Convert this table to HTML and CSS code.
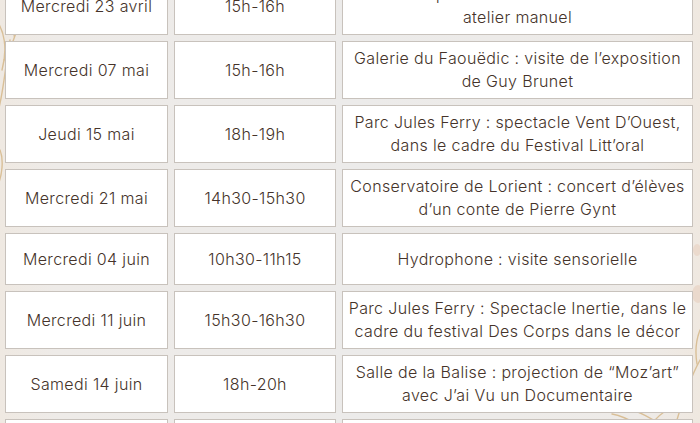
FILE: index.html
```html
<!DOCTYPE html>
<html lang="fr">
<head>
<meta charset="utf-8">
<link rel="stylesheet" href="styles.css">
</head>
<body>
<div class="page">
  <svg class="deco" width="700" height="423" viewBox="0 0 700 423" aria-hidden="true">
    <g fill="none" stroke="#d9bf97" stroke-width="1.4" stroke-linecap="round">
      <path d="M-4 20 C4 30 8 48 2 70"/>
      <path d="M14 36 C18 30 20 26 24 22"/>
      <path d="M10 40 C6 60 4 90 -2 112"/>
      <path d="M17 30 C12 44 10 52 4 60"/>
      <path d="M0 150 C4 160 2 175 -2 185"/>
      <path d="M620 405 C640 412 652 418 668 430"/>
      <path d="M652 423 C662 412 672 405 690 398"/>
      <path d="M700 360 C690 378 684 396 676 423"/>
      <path d="M700 330 C696 340 695 352 697 364"/>
      <path d="M612 414 C622 416 630 420 636 424"/>
    </g>
    <g fill="#ead6c8" opacity="0.8">
      <ellipse cx="698" cy="294" rx="6" ry="9"/>
      <ellipse cx="697" cy="250" rx="4" ry="6"/>
    </g>
  </svg>
  <div class="schedule">
    <div class="cell">Mercredi 23 avril</div>
    <div class="cell">15h-16h</div>
    <div class="cell">Médiathèque de Kervénanec : lectures et atelier manuel</div>

    <div class="cell">Mercredi 07 mai</div>
    <div class="cell">15h-16h</div>
    <div class="cell">Galerie du Faouëdic : visite de l’exposition de Guy Brunet</div>

    <div class="cell">Jeudi 15 mai</div>
    <div class="cell">18h-19h</div>
    <div class="cell">Parc Jules Ferry : spectacle Vent D’Ouest, dans le cadre du Festival Litt’oral</div>

    <div class="cell">Mercredi 21 mai</div>
    <div class="cell">14h30-15h30</div>
    <div class="cell">Conservatoire de Lorient : concert d’élèves d’un conte de Pierre Gynt</div>

    <div class="cell">Mercredi 04 juin</div>
    <div class="cell">10h30-11h15</div>
    <div class="cell">Hydrophone : visite sensorielle</div>

    <div class="cell">Mercredi 11 juin</div>
    <div class="cell">15h30-16h30</div>
    <div class="cell">Parc Jules Ferry : Spectacle Inertie, dans le cadre du festival Des Corps dans le décor</div>

    <div class="cell">Samedi 14 juin</div>
    <div class="cell">18h-20h</div>
    <div class="cell">Salle de la Balise : projection de “Moz’art” avec J’ai Vu un Documentaire</div>

    <div class="cell">Mercredi 18 juin</div>
    <div class="cell">15h-16h</div>
    <div class="cell">Médiathèque de Lorient : lectures pour les tout-petits</div>
  </div>
</div>
</body>
</html>
```

FILE: styles.css
```css
html, body {
  margin: 0;
  padding: 0;
}
body {
  background: #eeebe8;
  font-family: Inter, "Noto Sans", sans-serif;
  color: #45332a;
  overflow: hidden;
  width: 700px;
  height: 423px;
}
.page {
  position: relative;
  width: 700px;
  height: 423px;
  overflow: hidden;
  background: linear-gradient(90deg, #efe9e2 0%, #eeebe8 8%, #ecebea 50%, #eeebe8 92%, #efe8e0 100%);
}
.deco {
  position: absolute;
  left: 0;
  top: 0;
}
.schedule {
  position: relative;
  display: grid;
  grid-template-columns: 163px 162px 351px;
  column-gap: 6px;
  row-gap: 6px;
  margin-top: -23px;
  padding-left: 5px;
}
.cell {
  box-sizing: border-box;
  min-height: 52px;
  display: flex;
  align-items: center;
  justify-content: center;
  text-align: center;
  background: #ffffff;
  border: 1px solid #c8c2bc;
  padding: 5px 4px;
  font-size: 16px;
  font-weight: 350;
  letter-spacing: 0.35px;
  line-height: 23px;
}
```
